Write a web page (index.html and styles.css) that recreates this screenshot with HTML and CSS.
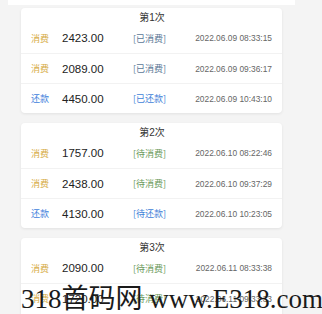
FILE: index.html
```html
<!DOCTYPE html>
<html lang="zh">
<head>
<meta charset="utf-8">
<link rel="stylesheet" href="styles.css">
</head>
<body>
<div class="page">
  <div class="strip"></div>
  <div class="card">
    <div class="title">第1次</div>
    <div class="row"><span class="kind spend">消费</span><span class="amt">2423.00</span><span class="st done">[已消费]</span><span class="date">2022.06.09 08:33:15</span></div>
    <div class="row"><span class="kind spend">消费</span><span class="amt">2089.00</span><span class="st done">[已消费]</span><span class="date">2022.06.09 09:36:17</span></div>
    <div class="row"><span class="kind repay">还款</span><span class="amt">4450.00</span><span class="st repaid">[已还款]</span><span class="date">2022.06.09 10:43:10</span></div>
  </div>
  <div class="card">
    <div class="title">第2次</div>
    <div class="row"><span class="kind spend">消费</span><span class="amt">1757.00</span><span class="st wait">[待消费]</span><span class="date">2022.06.10 08:22:46</span></div>
    <div class="row"><span class="kind spend">消费</span><span class="amt">2438.00</span><span class="st wait">[待消费]</span><span class="date">2022.06.10 09:37:29</span></div>
    <div class="row"><span class="kind repay">还款</span><span class="amt">4130.00</span><span class="st repaid">[待还款]</span><span class="date">2022.06.10 10:23:05</span></div>
  </div>
  <div class="card">
    <div class="title">第3次</div>
    <div class="row"><span class="kind spend">消费</span><span class="amt">2090.00</span><span class="st wait">[待消费]</span><span class="date">2022.06.11 08:33:38</span></div>
    <div class="row"><span class="kind spend">消费</span><span class="amt">1720.00</span><span class="st wait">[待消费]</span><span class="date">2022.06.11 09:33:33</span></div>
  </div>
</div>
<div class="watermark">318首码网 www.E318.com</div>
</body>
</html>
```
FILE: styles.css
```css
html, body {
  margin: 0;
  padding: 0;
  background: #f4f4f4;
  overflow: hidden;
  height: 314px;
}
body {
  font-family: "Liberation Sans", "Noto Sans CJK SC", sans-serif;
  position: relative;
}
.page {
  padding-left: 8px;
  width: 287px;
}
.strip {
  height: 5px;
  background: #ffffff;
  margin-bottom: 3px;
}
.card {
  margin: 0 13px 10px 13px;
  height: 105px;
  background: #ffffff;
  border-radius: 4px;
  box-shadow: 0 1px 3px rgba(0, 0, 0, 0.08);
  overflow: hidden;
}
.title {
  height: 15px;
  line-height: 20px;
  text-align: center;
  font-size: 10px;
  color: #333333;
  padding-left: 1px;
}
.row {
  height: 30px;
  display: flex;
  align-items: center;
  padding: 0 10px 0 10px;
  border-top: 1px solid #f2f2f2;
  box-sizing: border-box;
}
.title + .row {
  border-top: none;
}
.kind {
  width: 31px;
  font-size: 9px;
  font-family: "Noto Sans CJK SC", sans-serif;
}
.spend { color: #d6ab45; }
.repay { color: #3f82dc; }
.amt {
  width: 71px;
  font-size: 11.5px;
  color: #222222;
}
.st {
  font-size: 9px;
  font-family: "Noto Sans CJK SC", sans-serif;
}
.done { color: #5a7796; }
.wait { color: #6b9a5c; }
.repaid { color: #3f7fd8; }
.date {
  margin-left: auto;
  font-size: 8.4px;
  color: #666666;
}
.watermark {
  position: absolute;
  left: 21px;
  top: 284px;
  font-family: "Liberation Serif", "Noto Sans CJK SC", serif;
  font-size: 27px;
  line-height: 30px;
  color: #1a1a1a;
  white-space: nowrap;
}
```
